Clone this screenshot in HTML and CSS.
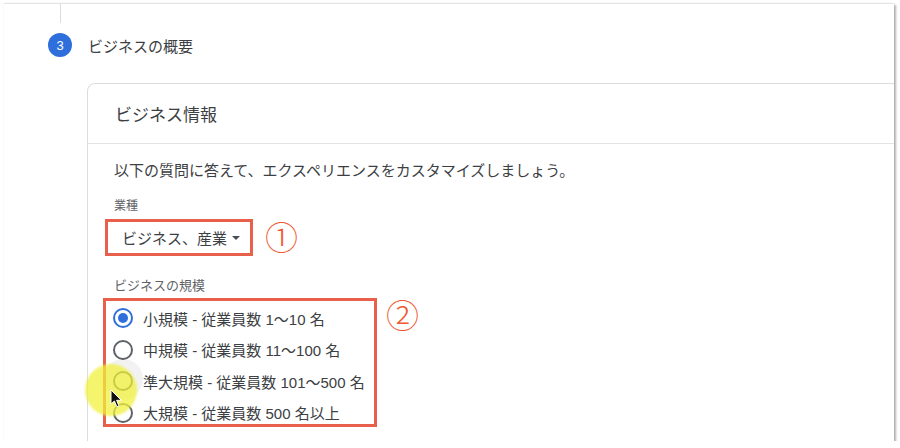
FILE: index.html
```html
<!DOCTYPE html>
<html lang="ja">
<head>
<meta charset="utf-8">
<title>ビジネスの概要</title>
<link rel="stylesheet" href="styles.css">
</head>
<body>
<div class="frame">
  <div class="step-line"></div>
  <div class="step-header">
    <span class="step-num">3</span>
    <span class="step-title">ビジネスの概要</span>
  </div>
  <div class="card">
    <div class="card-head">ビジネス情報</div>
    <div class="card-body">
      <p class="intro">以下の質問に答えて、エクスペリエンスをカスタマイズしましょう。</p>
      <div class="label">業種</div>
      <div class="row">
        <div class="select-box">
          <span>ビジネス、産業</span>
          <span class="caret"></span>
        </div>
        <span class="mark mark-1">①</span>
      </div>
      <div class="label label-size">ビジネスの規模</div>
      <div class="row">
        <div class="radio-box">
          <div class="radio-row"><span class="radio checked"></span><span>小規模 - 従業員数 1〜10 名</span></div>
          <div class="radio-row"><span class="radio"></span><span>中規模 - 従業員数 11〜100 名</span></div>
          <div class="radio-row"><span class="radio hovered"></span><span>準大規模 - 従業員数 101〜500 名</span></div>
          <div class="radio-row"><span class="radio"></span><span>大規模 - 従業員数 500 名以上</span></div>
        </div>
        <span class="mark mark-2">②</span>
      </div>
    </div>
  </div>
  <div class="ripple"></div>
  <div class="highlight"></div>
  <svg class="cursor" width="13" height="19" viewBox="0 0 13 19">
    <path d="M1 1 L1 15 L4.4 12 L6.9 17.8 L9 16.9 L6.6 11.3 L11.3 11.3 Z" fill="#111" stroke="#fff" stroke-width="1" stroke-linejoin="round"/>
  </svg>
</div>
</body>
</html>
```
FILE: styles.css
```css
* { box-sizing: border-box; }
html, body { margin: 0; padding: 0; background: #fff; }
body {
  font-family: "Liberation Sans", "Noto Sans CJK JP", sans-serif;
  color: #3c4043;
}
.frame {
  position: relative;
  margin: 3px 0 0 4px;
  width: 890px;
  height: 438px;
  overflow: hidden;
  background: #fff;
  border-top: 1px solid #e4e4e4;
  box-shadow: 2px 2px 2px rgba(0,0,0,0.3), 0 0 1px rgba(0,0,0,0.12);
}
.step-line {
  margin-left: 56px;
  width: 1px;
  height: 19px;
  background: #dadce0;
}
.step-header {
  display: flex;
  align-items: center;
  margin: 10px 0 0 44px;
  height: 24px;
}
.step-num {
  width: 24px;
  height: 24px;
  border-radius: 50%;
  background: #2f6fdc;
  color: #fff;
  font-size: 13px;
  display: flex;
  align-items: center;
  justify-content: center;
}
.step-title {
  margin-left: 16px;
  font-size: 15px;
  color: #3c4043;
}
.card {
  margin: 26px -20px 0 83px;
  height: 420px;
  border: 1px solid #dadce0;
  border-radius: 8px 8px 0 0;
}
.card-head {
  height: 60px;
  padding-left: 27px;
  display: flex;
  align-items: center;
  font-size: 17px;
  color: #3c4043;
  border-bottom: 1px solid #e3e3e3;
}
.card-body {
  padding: 17px 0 0 26px;
}
.intro {
  margin: 0;
  font-size: 15px;
  line-height: 20px;
  color: #3c4043;
}
.label {
  margin-top: 17px;
  font-size: 12px;
  line-height: 16px;
  color: #5f6368;
}
.label-size {
  margin-top: 22px;
  font-size: 13px;
}
.row {
  display: flex;
  align-items: flex-start;
}
.select-box {
  margin: 5px 0 0 -9px;
  width: 148px;
  height: 37px;
  border: 3px solid #e8604c;
  padding: 0 10px 0 14px;
  display: flex;
  align-items: center;
  justify-content: space-between;
  font-size: 15px;
  color: #3c4043;
}
.caret {
  width: 0;
  height: 0;
  border-left: 4px solid transparent;
  border-right: 4px solid transparent;
  border-top: 4.5px solid #4a4d51;
}
.mark {
  font-family: "Noto Sans CJK JP", sans-serif;
  font-weight: 300;
  font-size: 33px;
  line-height: 36px;
  color: #ef5a32;
}
.mark-1 { margin: 4px 0 0 12px; }
.mark-2 { margin: 2px 0 0 9px; }
.radio-box {
  margin: 4px 0 0 -11px;
  width: 274px;
  height: 129px;
  border: 3px solid #e8604c;
  padding: 7px 0 0 7px;
  display: flex;
  flex-direction: column;
  gap: 11.5px;
}
.radio-row {
  display: flex;
  align-items: center;
  height: 20px;
  gap: 10px;
  font-size: 15px;
  color: #3c4043;
}
.radio {
  position: relative;
  width: 20px;
  height: 20px;
  border-radius: 50%;
  border: 2px solid #5f6368;
  flex: none;
}
.radio.checked { border-color: #2f6fdc; }
.radio.checked::after {
  content: "";
  position: absolute;
  left: 3px;
  top: 3px;
  width: 10px;
  height: 10px;
  border-radius: 50%;
  background: #2f6fdc;
}
.ripple {
  position: absolute;
  left: 99px;
  top: 355px;
  width: 40px;
  height: 40px;
  border-radius: 50%;
  background: rgba(0,0,0,0.05);
}
.highlight {
  position: absolute;
  left: 81px;
  top: 360px;
  width: 52px;
  height: 52px;
  border-radius: 50%;
  background: rgba(240,240,60,0.75);
  filter: blur(1px);
}
.cursor {
  position: absolute;
  left: 106px;
  top: 385px;
}
```
